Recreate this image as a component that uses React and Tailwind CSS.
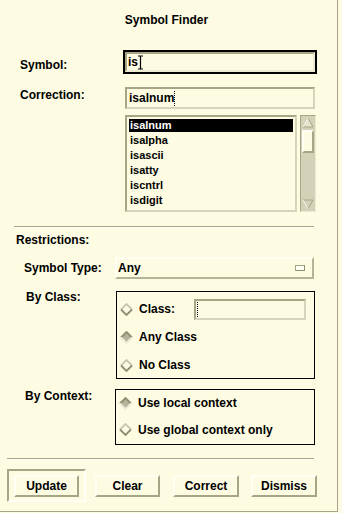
import React from 'react';

const listItems = ['isalnum', 'isalpha', 'isascii', 'isatty', 'iscntrl', 'isdigit'];

const Diamond = ({ on }) => (
  <svg width="13" height="13" viewBox="0 0 13 13" className="shrink-0">
    {on && <polygon points="6.5,1 12,6.5 6.5,12 1,6.5" fill="#b4b49c" />}
    <polyline points="1,6.5 6.5,1 12,6.5" fill="none" stroke={on ? '#8e8e70' : '#c9c9b2'} strokeWidth="1.8" />
    <polyline points="1,6.5 6.5,12 12,6.5" fill="none" stroke={on ? '#ebebd8' : '#8e8e70'} strokeWidth="1.8" />
  </svg>
);

const IBeam = () => (
  <svg width="7" height="15" viewBox="0 0 7 15" className="ml-[-1px]">
    <path d="M1 1h5M3.5 1v13M1 14h5" stroke="#000" strokeWidth="1.2" fill="none" />
  </svg>
);

const DotCursor = () => (
  <span className="inline-block w-[1px] h-[15px] border-l border-dotted border-black" />
);

const Button = ({ children, className = '' }) => (
  <div
    className={`h-[22px] flex items-center justify-center border-2 border-t-[#fffff4] border-l-[#fffff4] border-b-[#a6a686] border-r-[#a6a686] ${className}`}
  >
    {children}
  </div>
);

const Separator = ({ className = '' }) => (
  <div className={`h-[2px] border-t border-t-[#a6a686] border-b border-b-[#fffff4] ${className}`} />
);

export default function App() {
  return (
    <div className="w-[342px] h-[513px] bg-[#fdfbe2] font-['Liberation_Sans',Arial,sans-serif] font-bold text-[12px] leading-4 text-black">
      <div className="w-[338px] h-[512px] border-r border-b border-[#a6a686] pt-[12px]">
        <div className="w-[333px] text-center">Symbol Finder</div>

        {/* Symbol */}
        <div className="flex items-start pl-[20px] mt-[22px]">
          <div className="w-[103px] pt-[7px]">Symbol:</div>
          <div className="w-[194px] h-[24px] border-2 border-black">
            <div className="h-full border-2 border-t-[#a6a686] border-l-[#a6a686] border-b-[#ecebd2] border-r-[#ecebd2] flex items-center pl-[1px]">
              <span>is</span>
              <IBeam />
            </div>
          </div>
        </div>

        {/* Correction */}
        <div className="flex items-start pl-[20px] mt-[13px]">
          <div className="w-[105px]">Correction:</div>
          <div className="w-[190px] h-[22px] border-2 border-t-[#a6a686] border-l-[#a6a686] border-b-[#d6d5bc] border-r-[#d6d5bc] flex items-center pl-[2px]">
            <span>isalnum</span>
            <DotCursor />
          </div>
        </div>

        {/* List + scrollbar */}
        <div className="flex pl-[125px] mt-[6px] gap-[3px]">
          <div className="w-[172px] h-[97px] border-2 border-t-[#a6a686] border-l-[#a6a686] border-b-[#d6d5bc] border-r-[#d6d5bc] pt-[2px] px-[2px] text-[11px]">
            {listItems.map((item, i) => (
              <div
                key={item}
                className={`h-[13px] mb-[2px] leading-[13px] pl-[1px] ${i === 0 ? 'bg-black text-white' : ''}`}
              >
                {item}
              </div>
            ))}
          </div>
          <div className="w-[16px] h-[97px] bg-[#d3d2b8] border border-l-[#a6a686] border-t-[#a6a686] border-r-[#ecebd2] border-b-[#ecebd2] flex flex-col items-center pt-[1px]">
            <svg width="12" height="11" viewBox="0 0 12 11">
              <polygon points="6,1 11,10 1,10" fill="#e4e3cc" stroke="#a6a686" strokeWidth="1" />
              <polyline points="1,10 6,1" stroke="#fffff4" strokeWidth="1" fill="none" />
            </svg>
            <div className="w-[12px] h-[23px] mt-[2px] bg-[#fdfbe2] border-2 border-t-[#fffff4] border-l-[#fffff4] border-b-[#a6a686] border-r-[#a6a686]" />
            <div className="flex-1" />
            <svg width="12" height="11" viewBox="0 0 12 11" className="mb-[1px]">
              <polygon points="1,1 11,1 6,10" fill="#d3d2b8" stroke="#a6a686" strokeWidth="1" />
              <polyline points="1,1 6,10" stroke="#fffff4" strokeWidth="1" fill="none" />
            </svg>
          </div>
        </div>

        <Separator className="ml-[14px] w-[300px] mt-[14px]" />

        <div className="pl-[16px] mt-[4px]">Restrictions:</div>

        {/* Symbol type */}
        <div className="flex items-center pl-[24px] mt-[9px]">
          <div className="w-[91px]">Symbol Type:</div>
          <div className="w-[199px] h-[22px] border-2 border-t-[#fffff4] border-l-[#fffff4] border-b-[#b4b496] border-r-[#b4b496] flex items-center pl-[1px] pr-[7px]">
            <span className="flex-1">Any</span>
            <div className="w-[10px] h-[6px] border border-t-[#a6a686] border-l-[#a6a686] border-b-[#8e8e70] border-r-[#8e8e70] bg-[#fffff4]" />
          </div>
        </div>

        {/* By class */}
        <div className="flex items-start pl-[26px] mt-[10px]">
          <div className="w-[90px]">By Class:</div>
          <div className="w-[199px] h-[88px] mt-[2px] border border-black pl-[3px] pt-[3px]">
            <div className="h-[28px] flex items-center">
              <Diamond />
              <span className="ml-[6px] w-[55px]">Class:</span>
              <div className="w-[112px] h-[21px] border-2 border-t-[#a6a686] border-l-[#a6a686] border-b-[#d6d5bc] border-r-[#d6d5bc] flex items-center pl-[1px]">
                <DotCursor />
              </div>
            </div>
            <div className="h-[28px] flex items-center">
              <Diamond on />
              <span className="ml-[6px]">Any Class</span>
            </div>
            <div className="h-[28px] flex items-center">
              <Diamond />
              <span className="ml-[6px]">No Class</span>
            </div>
          </div>
        </div>

        {/* By context */}
        <div className="flex items-start pl-[25px] mt-[9px]">
          <div className="w-[90px]">By Context:</div>
          <div className="w-[200px] h-[56px] mt-[1px] border border-black pl-[3px]">
            <div className="h-[26px] flex items-center">
              <Diamond on />
              <span className="ml-[6px]">Use local context</span>
            </div>
            <div className="h-[27px] flex items-center">
              <Diamond />
              <span className="ml-[6px]">Use global context only</span>
            </div>
          </div>
        </div>

        <Separator className="ml-[7px] w-[307px] mt-[13px]" />

        {/* Buttons */}
        <div className="flex items-center pl-[7px] mt-[9px]">
          <div className="w-[79px] h-[33px] border-2 border-t-[#a6a686] border-l-[#a6a686] border-b-[#fffff4] border-r-[#fffff4] flex items-center justify-center">
            <Button className="w-[65px]">Update</Button>
          </div>
          <Button className="w-[65px] ml-[9px]">Clear</Button>
          <Button className="w-[66px] ml-[13px]">Correct</Button>
          <Button className="w-[66px] ml-[12px]">Dismiss</Button>
        </div>
      </div>
    </div>
  );
}
